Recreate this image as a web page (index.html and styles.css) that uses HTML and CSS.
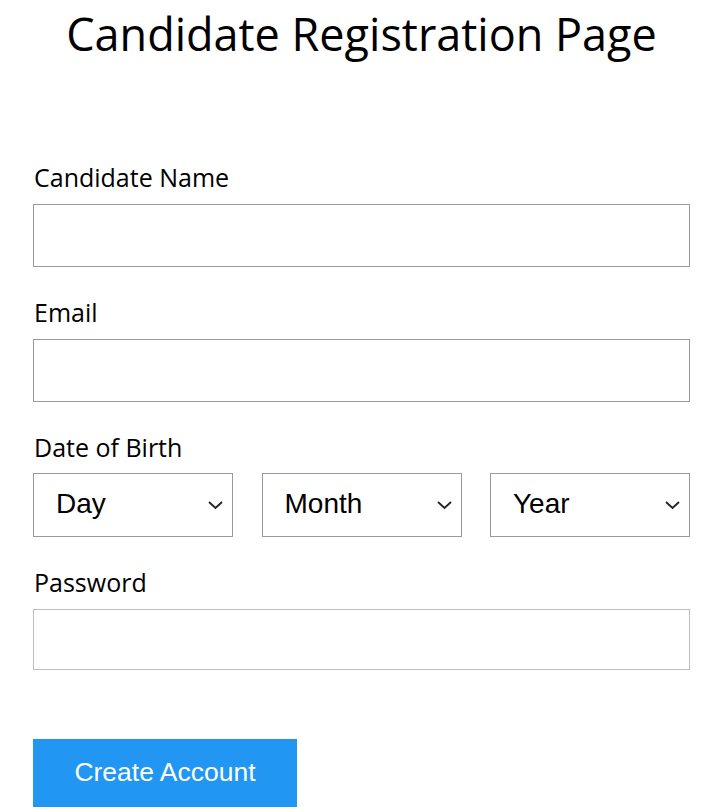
FILE: index.html
```html
<!DOCTYPE html>
<html lang="en">
<head>
<meta charset="utf-8">
<title>Candidate Registration Page</title>
<link rel="stylesheet" href="styles.css">
</head>
<body>
<div class="page">
  <h1 class="title">Candidate Registration Page</h1>
  <form class="form">
    <div class="field">
      <label class="label" for="name">Candidate Name</label>
      <input class="input" id="name" type="text">
    </div>
    <div class="field">
      <label class="label" for="email">Email</label>
      <input class="input" id="email" type="email">
    </div>
    <div class="field">
      <label class="label">Date of Birth</label>
      <div class="dob">
        <div class="select-wrap">
          <select class="select"><option>Day</option></select>
          <svg class="chev" width="15" height="8" viewBox="0 0 15 8"><path d="M1 1 L7.5 7 L14 1" fill="none" stroke="#222" stroke-width="1.8"/></svg>
        </div>
        <div class="select-wrap">
          <select class="select"><option>Month</option></select>
          <svg class="chev" width="15" height="8" viewBox="0 0 15 8"><path d="M1 1 L7.5 7 L14 1" fill="none" stroke="#222" stroke-width="1.8"/></svg>
        </div>
        <div class="select-wrap">
          <select class="select"><option>Year</option></select>
          <svg class="chev" width="15" height="8" viewBox="0 0 15 8"><path d="M1 1 L7.5 7 L14 1" fill="none" stroke="#222" stroke-width="1.8"/></svg>
        </div>
      </div>
    </div>
    <div class="field">
      <label class="label" for="pw">Password</label>
      <input class="input input-pw" id="pw" type="password">
    </div>
    <button class="btn" type="button">Create Account</button>
  </form>
</div>
</body>
</html>
```
FILE: styles.css
```css
html, body {
  margin: 0;
  padding: 0;
  background: #fff;
}
.page {
  padding: 0 15px 0 33px;
  font-family: "Open Sans", "Noto Sans", sans-serif;
  color: #000;
}
.title {
  margin: 0;
  padding-top: 2px;
  font-size: 45px;
  font-weight: 400;
  text-align: center;
  line-height: 63px;
}
.form {
  margin-top: 96px;
  display: flex;
  flex-direction: column;
  gap: 29px;
}
.field {
  display: flex;
  flex-direction: column;
}
.label {
  font-size: 25px;
  line-height: 33px;
  margin-left: 1px;
  margin-bottom: 10px;
}
.input {
  box-sizing: border-box;
  height: 63px;
  width: 100%;
  margin: 0;
  border: 1px solid #9a9a9a;
  border-radius: 0;
  background: #fff;
}
.input-pw {
  height: 61px;
  border-color: #bdbdbd;
}
.dob {
  display: grid;
  grid-template-columns: 200px 200px 200px;
  justify-content: space-between;
  margin-top: -1px;
}
.select-wrap {
  position: relative;
}
.select {
  box-sizing: border-box;
  width: 100%;
  height: 64px;
  margin: 0;
  padding: 0 0 3px 22px;
  -webkit-appearance: none;
  appearance: none;
  border: 1px solid #9a9a9a;
  border-radius: 0;
  background: #fff;
  color: #000;
  font-family: "Liberation Sans", Arial, sans-serif;
  font-size: 28px;
}
.chev {
  position: absolute;
  right: 10px;
  top: 28px;
  pointer-events: none;
}
.btn {
  margin-top: 40px;
  align-self: flex-start;
  width: 264px;
  height: 68px;
  border: none;
  border-radius: 0;
  background: #2196f3;
  color: #fff;
  font-family: "Liberation Sans", Arial, sans-serif;
  font-size: 26.5px;
  padding: 0 0 2px 0;
}
```
